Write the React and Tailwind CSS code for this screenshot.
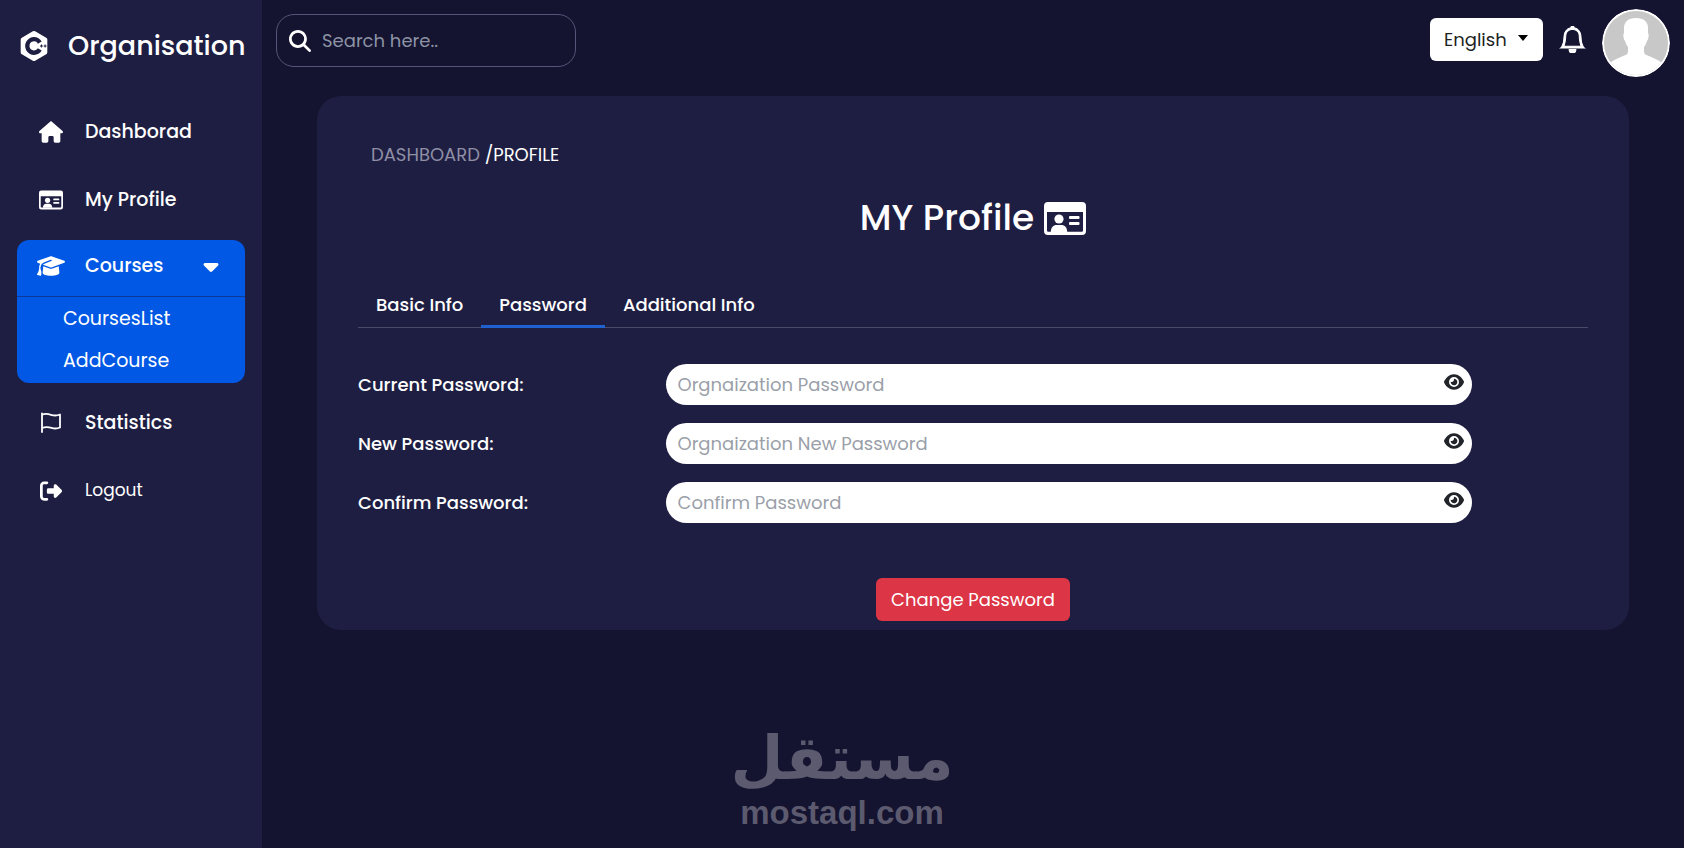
import { useState } from 'react';
import {
  FaCaretDown,
  FaEye,
  FaGraduationCap,
  FaHouse,
  FaMagnifyingGlass,
  FaRightFromBracket,
} from 'react-icons/fa6';
import { BiLogoCPlusPlus } from 'react-icons/bi';
import { BsBell } from 'react-icons/bs';

const tabs = ['Basic Info', 'Password', 'Additional Info'];

const fields = [
  { id: 'current', label: 'Current Password:', placeholder: 'Orgnaization Password' },
  { id: 'new', label: 'New Password:', placeholder: 'Orgnaization New Password' },
  { id: 'confirm', label: 'Confirm Password:', placeholder: 'Confirm Password' },
];

const FlagIcon = ({ className }) => (
  <svg viewBox="0 0 24 22" fill="none" stroke="currentColor" strokeWidth="1.8" className={className}>
    <path d="M3 1.500v18.500" strokeLinecap="round" />
    <path d="M3 2.600c3-1 5.500-.900 9 .200s6 1 9-.300v13c-3 1.300-5.500 1.300-8.500.400s-6.500-1-9.500.100" strokeLinejoin="round" />
  </svg>
);

const IdCardIcon = ({ className }) => (
  <svg viewBox="0 0 42 33" fill="currentColor" className={className}>
    <path
      fillRule="evenodd"
      d="M4 0h34a4 4 0 0 1 4 4v25a4 4 0 0 1-4 4H4a4 4 0 0 1-4-4V4a4 4 0 0 1 4-4zM3 10v18.500a1.200 1.200 0 0 0 1.200 1.200h33.600a1.200 1.200 0 0 0 1.200-1.200V10z"
    />
    <circle cx="15" cy="17" r="4.600" />
    <path d="M6.800 30c0-4.500 2.700-7 5.700-7h5c3 0 5.700 2.500 5.700 7z" />
    <rect x="25" y="14" width="10.500" height="3" rx="1" />
    <rect x="25" y="20" width="10.500" height="3" rx="1" />
  </svg>
);

const NavItem = ({ icon: Icon, children, className = 'text-[19px] font-medium' }) => (
  <a href="#" className={`flex items-center gap-5 px-5 h-11 text-white ${className}`}>
    <span className="flex justify-center w-7 shrink-0">
      <Icon className="w-6 h-[22px]" />
    </span>
    {children}
  </a>
);

const Sidebar = () => {
  const [open, setOpen] = useState(true);

  return (
    <aside className="w-[262px] shrink-0 bg-[#1e1e42]">
      <div className="flex items-center gap-4 pl-4 pt-6">
        <BiLogoCPlusPlus className="w-9 h-9 shrink-0" />
        <span className="text-[27px] leading-11 font-medium">Organisation</span>
      </div>

      <nav className="flex flex-col gap-6 px-[17px] pt-[42px]">
        <NavItem icon={FaHouse}>Dashborad</NavItem>
        <NavItem icon={IdCardIcon}>My Profile</NavItem>

        {/* Courses dropdown */}
        <div className="-mt-1.5 rounded-xl overflow-hidden bg-[#0058e4]">
          <button
            type="button"
            onClick={() => setOpen(!open)}
            className="flex items-center gap-5 w-full h-14 pl-5 pr-6 pb-1 text-[19px] font-medium text-left"
          >
            <FaGraduationCap className="w-7 h-6 shrink-0" />
            Courses
            <FaCaretDown className="w-5 h-6 ml-auto" />
          </button>
          {open && (
            <div className="flex flex-col border-t border-[#0b3b96] py-px pl-[46px] text-[19px]">
              <a href="#" className="leading-[42px]">CoursesList</a>
              <a href="#" className="leading-[42px]">AddCourse</a>
            </div>
          )}
        </div>

        <NavItem icon={FlagIcon} className="-mt-1.5 text-[19px] font-medium">Statistics</NavItem>
        <NavItem icon={FaRightFromBracket} className="text-[17px] font-normal">Logout</NavItem>
      </nav>
    </aside>
  );
};

const Avatar = () => (
  <svg viewBox="0 0 68 68" className="w-[68px] h-[68px] rounded-full" role="img" aria-label="User avatar">
    <circle cx="34" cy="34" r="34" fill="#fff" />
    <clipPath id="avatar-clip">
      <circle cx="34" cy="34" r="32" />
    </clipPath>
    <g clipPath="url(#avatar-clip)">
      <rect width="68" height="68" fill="#c8c8c8" />
      <path
        d="M34 9c-8 0-12 4-12 10v5c-1 1-1 5 1 8 1 3 2 5 3 6v5c0 2-2 3-5 4-6 3-10 4-16 9v13h58V56c-6-5-10-6-16-9-3-1-5-2-5-4v-5c1-1 2-3 3-6 2-3 2-7 1-8v-5c0-6-4-10-12-10z"
        fill="#fff"
      />
    </g>
  </svg>
);

const TopBar = () => (
  <header className="flex items-start justify-between px-[14px] pt-[9px]">
    <label className="flex items-center gap-[11px] w-[300px] h-[53px] mt-[5px] px-3 border border-[#57567a] rounded-[18px]">
      <FaMagnifyingGlass className="w-[22px] h-[22px] shrink-0" />
      <input
        type="search"
        aria-label="Search"
        placeholder="Search here.."
        className="w-full bg-transparent text-lg outline-none placeholder:text-[#8d93a5]"
      />
    </label>

    <div className="flex items-start gap-4">
      <div className="relative mt-[9px]">
        <select
          aria-label="Language"
          className="appearance-none w-[113px] h-[43px] pl-[14px] rounded-md bg-white text-lg text-[#1c1f23] outline-none"
        >
          <option>English</option>
          <option>Arabic</option>
        </select>
        <svg viewBox="0 0 10 6" className="absolute right-[15px] top-[17px] w-[10px] h-[6px] pointer-events-none">
          <path d="M0 0h10L5 6z" fill="#000" />
        </svg>
      </div>
      <button type="button" aria-label="Notifications" className="mt-[17px]">
        <BsBell className="w-[27px] h-[27px]" strokeWidth="0.6" />
      </button>
      <Avatar />
    </div>
  </header>
);

const PasswordField = ({ id, label, placeholder }) => {
  const [visible, setVisible] = useState(false);

  return (
    <div className="grid grid-cols-12 items-center">
      <label htmlFor={id} className="col-span-3 text-lg font-medium">
        {label}
      </label>
      <div className="col-span-8 relative mr-[14px]">
        <input
          id={id}
          type={visible ? 'text' : 'password'}
          placeholder={placeholder}
          className="block w-full h-[41px] pl-3 pr-12 rounded-full bg-white text-lg text-gray-800 outline-none placeholder:text-[#9a9fa9]"
        />
        <button
          type="button"
          aria-label="Show password"
          onClick={() => setVisible(!visible)}
          className="absolute right-2 top-2 text-[#212529]"
        >
          <FaEye className="w-5 h-5" />
        </button>
      </div>
    </div>
  );
};

const App = () => {
  const [active, setActive] = useState('Password');

  return (
    <div className="relative flex min-h-screen bg-[#141330] font-['Poppins','Inter',sans-serif] text-white">
      <Sidebar />

      <div className="flex-1 min-w-0">
        <TopBar />

        <main className="mx-[55px] mt-[19px] px-[41px] pt-[45px] pb-[9px] rounded-3xl bg-[#1e1e42]">
          <p className="pl-[13px] text-lg leading-7 text-[#8f8fa6]">
            DASHBOARD <span className="text-white">/PROFILE</span>
          </p>

          <h1 className="flex items-center justify-center gap-[10px] mt-[22px] text-4xl leading-[54px] font-medium">
            MY Profile
            <IdCardIcon className="w-[42px] h-[33px]" />
          </h1>

          <div role="tablist" className="flex mt-[42px] border-b border-[#4a4a68]">
            {tabs.map((tab) => (
              <button
                key={tab}
                type="button"
                role="tab"
                aria-selected={tab === active}
                onClick={() => setActive(tab)}
                className={`-mb-px px-[18px] pb-0.5 text-lg leading-9 font-medium border-b-[3px] ${
                  tab === active ? 'border-[#1f62cf]' : 'border-transparent'
                }`}
              >
                {tab}
              </button>
            ))}
          </div>

          <form onSubmit={(e) => e.preventDefault()}>
            <div className="flex flex-col gap-[18px] mt-9">
              {fields.map((field) => (
                <PasswordField key={field.id} {...field} />
              ))}
            </div>
            <div className="flex justify-center mt-[55px]">
              <button type="submit" className="h-[43px] px-[15px] rounded-md bg-[#dc3545] text-lg">
                Change Password
              </button>
            </div>
          </form>
        </main>
      </div>

      {/* Watermark */}
      <div className="absolute inset-x-0 bottom-4 flex flex-col items-center font-bold text-[#5c5a6e] pointer-events-none">
        <span lang="ar" dir="rtl" className="font-['DejaVu_Sans',sans-serif] text-[61px] leading-[72px]">
          مستقل
        </span>
        <span className="font-['Liberation_Sans',sans-serif] text-[33px] leading-[38px]">mostaql.com</span>
      </div>
    </div>
  );
};

export default App;
